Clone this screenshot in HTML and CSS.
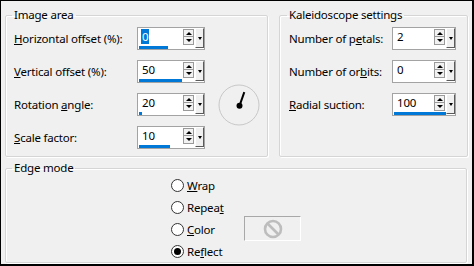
FILE: index.html
```html
<!DOCTYPE html>
<html lang="en">
<head>
    <meta charset="UTF-8">
    <title>Kaleidoscope</title>
    <link rel="stylesheet" href="styles.css">
</head>
<body>
    <div class="window">
        <div class="top">
            <fieldset class="group image">
                <legend>Image area</legend>
                <div class="form image-form">
                    <label><u>H</u>orizontal offset (%):</label>
                    <div class="spin">
                        <div class="field">
                            <div class="line"><span class="val"><span class="sel">0</span></span><span class="ud"><i class="up"></i><i class="down"></i></span></div>
                            <div class="track"><div class="fill" style="width: 51%"></div></div>
                        </div>
                        <span class="drop"></span>
                    </div>

                    <label><u>V</u>ertical offset (%):</label>
                    <div class="spin">
                        <div class="field">
                            <div class="line"><span class="val">50</span><span class="ud"><i class="up"></i><i class="down"></i></span></div>
                            <div class="track"><div class="fill" style="width: 77%"></div></div>
                        </div>
                        <span class="drop"></span>
                    </div>

                    <label>Rotation <u>a</u>ngle:</label>
                    <div class="spin">
                        <div class="field">
                            <div class="line"><span class="val">20</span><span class="ud"><i class="up"></i><i class="down"></i></span></div>
                            <div class="track"><div class="fill" style="width: 5%"></div></div>
                        </div>
                        <span class="drop"></span>
                    </div>

                    <label><u>S</u>cale factor:</label>
                    <div class="spin">
                        <div class="field">
                            <div class="line"><span class="val">10</span><span class="ud"><i class="up"></i><i class="down"></i></span></div>
                            <div class="track"><div class="fill" style="width: 56%"></div></div>
                        </div>
                        <span class="drop"></span>
                    </div>

                    <div class="dial">
                        <svg width="42" height="42" viewBox="0 0 42 42">
                            <circle cx="21" cy="21" r="20" fill="none" stroke="#c8c8c8" stroke-width="1"/>
                            <line x1="21.5" y1="21.8" x2="26.3" y2="8.2" stroke="#000" stroke-width="2"/>
                            <circle cx="21.5" cy="21.8" r="3" fill="#000"/>
                        </svg>
                    </div>
                </div>
            </fieldset>

            <fieldset class="group kaleido">
                <legend>Kaleidoscope settings</legend>
                <div class="form kaleido-form">
                    <label>Number of p<u>e</u>tals:</label>
                    <div class="spin">
                        <div class="field">
                            <div class="line"><span class="val">2</span><span class="ud"><i class="up"></i><i class="down"></i></span></div>
                            <div class="track"></div>
                        </div>
                        <span class="drop"></span>
                    </div>

                    <label>Number of or<u>b</u>its:</label>
                    <div class="spin">
                        <div class="field">
                            <div class="line"><span class="val">0</span><span class="ud"><i class="up"></i><i class="down"></i></span></div>
                            <div class="track"></div>
                        </div>
                        <span class="drop"></span>
                    </div>

                    <label><u>R</u>adial suction:</label>
                    <div class="spin">
                        <div class="field">
                            <div class="line"><span class="val">100</span><span class="ud"><i class="up"></i><i class="down"></i></span></div>
                            <div class="track"><div class="fill" style="width: 100%"></div></div>
                        </div>
                        <span class="drop"></span>
                    </div>
                </div>
            </fieldset>
        </div>

        <fieldset class="group edge">
            <legend>Edge mode</legend>
            <div class="edge-grid">
                <div class="radio"><span class="dot"></span><span><u>W</u>rap</span></div>
                <div class="radio"><span class="dot"></span><span>Repea<u>t</u></span></div>
                <div class="radio"><span class="dot"></span><span><u>C</u>olor</span></div>
                <div class="radio"><span class="dot checked"></span><span>Re<u>f</u>lect</span></div>
                <div class="swatch">
                    <svg width="20" height="20" viewBox="0 0 20 20">
                        <circle cx="10" cy="10" r="8" fill="none" stroke="#bdbdbd" stroke-width="2.6"/>
                        <line x1="4.5" y1="4.5" x2="15.5" y2="15.5" stroke="#bdbdbd" stroke-width="2.6"/>
                    </svg>
                </div>
            </div>
        </fieldset>
    </div>
</body>
</html>
```

FILE: styles.css
```css
body {
    margin: 0;
    font-family: "Noto Sans", "Open Sans", sans-serif;
    font-size: 11.5px;
    letter-spacing: -0.2px;
    color: #000;
}
.window {
    width: 474px;
    height: 266px;
    box-sizing: border-box;
    border-style: solid;
    border-color: #000;
    border-width: 1px 2px 2px 1px;
    background-color: #f0f0f0;
    padding: 6px 0 1px 4px;
    display: flex;
    flex-direction: column;
}
.top {
    display: flex;
    gap: 11px;
}
.group {
    margin: 0;
    min-width: 0;
    border: 1px solid #d5d5d5;
    box-shadow: inset 1px 1px 0 #fff, 1px 1px 0 #fff;
    border-radius: 2px;
    box-sizing: border-box;
}
.group legend {
    padding: 0 2px;
    margin-left: -2px;
    line-height: 16px;
}
.image {
    width: 263px;
    padding: 4px 0 7px 8px;
}
.kaleido {
    width: 189px;
    padding: 4px 0 7px 9px;
}
.edge {
    width: 462px;
    margin-top: 3px;
    flex: 1;
    padding: 0 0 0 8px;
}
.form {
    display: grid;
    grid-auto-rows: 23px;
    row-gap: 10px;
}
.form label {
    grid-column: 1;
    align-self: center;
    white-space: nowrap;
}
.form .spin {
    grid-column: 2;
}
.image-form {
    grid-template-columns: 123px 68px 55px;
}
.kaleido-form {
    grid-template-columns: 103px 64px;
}
.dial {
    grid-column: 3;
    grid-row: 2 / 5;
    align-self: center;
    justify-self: end;
    width: 42px;
    height: 42px;
}
.dial svg {
    display: block;
}
.spin {
    display: flex;
    height: 23px;
    box-sizing: border-box;
    border: 1px solid #a3a3a3;
    background-color: #fff;
}
.field {
    flex: 1;
    display: flex;
    flex-direction: column;
}
.line {
    flex: 1;
    display: flex;
    align-items: center;
}
.val {
    flex: 1;
    padding-left: 4px;
    line-height: 14px;
}
.sel {
    background-color: #0078d7;
    color: #fff;
    padding: 0 1px;
    margin-left: -1px;
}
.ud {
    display: flex;
    flex-direction: column;
    width: 11px;
    margin-right: 1px;
    align-self: flex-start;
    margin-top: 1px;
}
.ud i {
    display: flex;
    align-items: center;
    justify-content: center;
    height: 8px;
    box-sizing: border-box;
    border: 1px solid #9a9a9a;
    background-color: #f2f2f2;
}
.ud i + i {
    border-top: none;
}
.ud .up::after {
    content: "";
    border-left: 3px solid transparent;
    border-right: 3px solid transparent;
    border-bottom: 3px solid #000;
}
.ud .down::after {
    content: "";
    border-left: 3px solid transparent;
    border-right: 3px solid transparent;
    border-top: 3px solid #000;
}
.track {
    height: 3px;
    margin: 0 0 0 1px;
}
.fill {
    height: 3px;
    background-color: #0078d7;
}
.drop {
    width: 9px;
    margin: 0 0 1px 0;
    box-sizing: border-box;
    background-color: #f0f0f0;
    border-style: solid;
    border-width: 1px;
    border-color: #fff #5a5a5a #5a5a5a #fff;
    display: flex;
    align-items: center;
    justify-content: center;
}
.drop::after {
    content: "";
    border-left: 2.5px solid transparent;
    border-right: 2.5px solid transparent;
    border-top: 3px solid #000;
}
.edge-grid {
    display: grid;
    grid-template-columns: 73px 57px;
    grid-template-rows: repeat(4, 22px);
    margin: -2px 0 0 157px;
}
.radio {
    grid-column: 1;
    display: flex;
    align-items: center;
    gap: 3px;
    white-space: nowrap;
}
.dot {
    width: 13px;
    height: 13px;
    box-sizing: border-box;
    border: 1px solid #333;
    border-radius: 50%;
    background-color: #fff;
    display: flex;
    align-items: center;
    justify-content: center;
}
.dot.checked::after {
    content: "";
    width: 7px;
    height: 7px;
    border-radius: 50%;
    background-color: #000;
}
.swatch {
    grid-column: 2;
    grid-row: 3;
    height: 25px;
    margin-top: -2px;
    box-sizing: border-box;
    border-style: solid;
    border-width: 1px;
    border-color: #a8a8a8 #fff #fff #a8a8a8;
    display: flex;
    align-items: center;
    justify-content: center;
}
.swatch svg {
    display: block;
}
```
